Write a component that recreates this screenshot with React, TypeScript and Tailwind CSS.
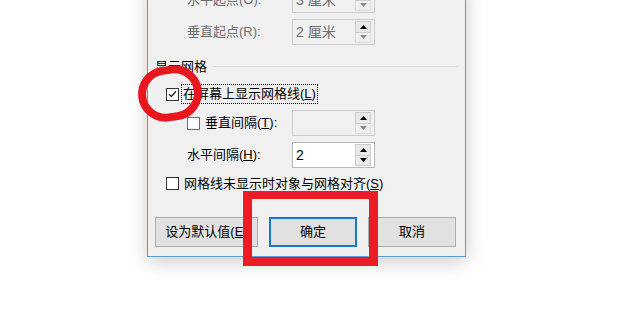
import React from "react";

const font = "font-['Liberation_Sans','Noto_Sans_CJK_SC',sans-serif]";

function Arrow({ up, dim }: { up?: boolean; dim?: boolean }) {
  return (
    <svg width="7" height="4" viewBox="0 0 7 4">
      <polygon
        points={up ? "0,4 7,4 3.5,0" : "0,0 7,0 3.5,4"}
        fill={dim ? "#8a8a8a" : "#000000"}
      />
    </svg>
  );
}

function Spin({ value, disabled }: { value?: string; disabled?: boolean }) {
  return (
    <div
      className={
        "flex h-[26px] w-[83px] items-stretch border " +
        (disabled
          ? "border-[#cccccc] bg-[#f0f0f0] text-[#6d6d6d]"
          : "border-[#b9b9b9] bg-white text-black")
      }
    >
      <div className="flex flex-1 items-center pl-[3px] text-[14px] leading-none">
        {value}
      </div>
      <div className="my-[1px] mr-[3px] flex w-[16px] flex-col">
        <div className="flex flex-1 items-center justify-center border border-[#cdcdcd] bg-[#e9e9e9]">
          <Arrow up />
        </div>
        <div
          className={
            "flex flex-1 items-center justify-center border border-t-0 " +
            (disabled ? "border-[#dcdcdc] bg-[#f0f0f0]" : "border-[#cdcdcd] bg-[#e9e9e9]")
          }
        >
          <Arrow dim={disabled} />
        </div>
      </div>
    </div>
  );
}

function Check({ checked, blue }: { checked?: boolean; blue?: boolean }) {
  return (
    <div
      className={
        "flex h-[13px] w-[13px] shrink-0 items-center justify-center border bg-white " +
        (blue ? "border-[#2a7fd4]" : "border-[#333333]")
      }
    >
      {checked && (
        <svg width="9" height="8" viewBox="0 0 9 8">
          <path d="M1 4.2 L3.4 6.5 L8 1.2" fill="none" stroke="#222" strokeWidth="1.3" />
        </svg>
      )}
    </div>
  );
}

function Btn({ label, w, primary }: { label: React.ReactNode; w: string; primary?: boolean }) {
  return (
    <div
      className={
        "flex h-[30px] items-center justify-center whitespace-nowrap bg-[#e1e1e1] text-[13px] text-black " +
        w +
        (primary ? " border-2 border-[#1479d4]" : " border border-[#adadad]")
      }
    >
      {label}
    </div>
  );
}

export default function App() {
  return (
    <div className={"relative h-[309px] w-[620px] overflow-hidden bg-white " + font}>
      <div className="-mt-[20px] ml-[147px] w-[319px] border border-[#5b9bd5] bg-[#f0f0f0] pb-[9px] pt-[6px] text-[13px] shadow-[0_5px_18px_rgba(0,0,0,0.2)]">
        <div className="flex h-[26px] items-center pl-[39px]">
          <span className="w-[105px] text-[#6d6d6d]">水平起点(O):</span>
          <Spin value="3 厘米" disabled />
        </div>
        <div className="mt-[6px] flex h-[26px] items-center pl-[39px]">
          <span className="w-[105px] text-[#6d6d6d]">垂直起点(R):</span>
          <Spin value="2 厘米" disabled />
        </div>
        <div className="mt-[14px] flex h-[14px] items-center px-[7px]">
          <span className="leading-none text-black">显示网格</span>
          <div className="ml-[6px] h-px flex-1 bg-[#dcdcdc]" />
        </div>
        <div className="mt-[11px] flex h-[20px] items-center pl-[18px]">
          <Check checked />
          <span className="ml-[2px] border border-dotted border-black px-[1px] leading-[18px] text-black">
            在屏幕上显示网格线(<span className="underline">L</span>)
          </span>
        </div>
        <div className="mt-[6px] flex h-[26px] items-center pl-[39px]">
          <div className="flex w-[105px] items-center">
            <Check blue />
            <span className="ml-[5px] text-black">
              垂直间隔(<span className="underline">T</span>):
            </span>
          </div>
          <Spin disabled />
        </div>
        <div className="mt-[6px] flex h-[26px] items-center pl-[39px]">
          <span className="w-[105px] text-black">
            水平间隔(<span className="underline">H</span>):
          </span>
          <Spin value="2" />
        </div>
        <div className="mt-[9px] flex h-[13px] items-center pl-[18px]">
          <Check />
          <span className="ml-[5px] text-black">
            网格线未显示时对象与网格对齐(<span className="underline">S</span>)
          </span>
        </div>
        <div className="mt-[27px] flex gap-[11px] pl-[7px]">
          <Btn
            w="w-[103px]"
            label={
              <>
                设为默认值(<span className="underline">E</span>)
              </>
            }
          />
          <Btn w="w-[88px]" label="确定" primary />
          <Btn w="w-[88px]" label="取消" />
        </div>
      </div>

      <div className="absolute left-[138px] top-[66px] h-[55px] w-[64px] rotate-[-8deg] rounded-full border-[8px] border-[#e8171f]" />
      <div className="absolute left-[243px] top-[191px] h-[75px] w-[135px] border-[9px] border-t-[8px] border-[#ec1c24]" />
    </div>
  );
}
